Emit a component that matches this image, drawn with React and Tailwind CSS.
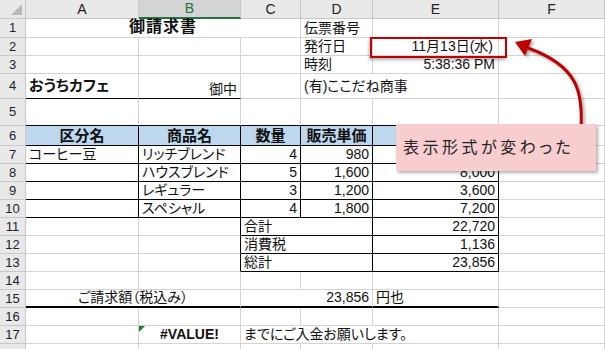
import React from "react";
import clsx from "clsx";

// right / bottom border styles for a cell (grid lines vs. black rules)
const R = { g: "border-r border-r-[#d4d4d4]", k: "border-r border-r-black", n: "" };
const B = {
  g: "border-b border-b-[#d4d4d4]",
  k: "border-b border-b-black",
  k2: "border-b-2 border-b-black",
  n: "",
};
const A = { l: "justify-start", r: "justify-end", c: "justify-center" };

const Cell = ({ r = "g", b = "g", a = "l", className = "", children }) => (
  <div
    className={clsx(
      "relative flex items-end min-w-0 whitespace-nowrap leading-none px-[3px] pb-[2px]",
      R[r],
      B[b],
      A[a],
      className
    )}
  >
    {children}
  </div>
);

const RowHead = ({ n }) => (
  <div className="flex items-center justify-center bg-[#e9e9e9] border-r border-b border-[#c8c8c8] text-[13px] text-[#1e1e2e]">
    {n}
  </div>
);

const ColHead = ({ children, active = false }) => (
  <div
    className={clsx(
      "flex items-center justify-center text-[14px] border-r border-[#c8c8c8]",
      active
        ? "bg-[#d4d4d4] text-[#217346] border-b-2 border-b-[#217346]"
        : "bg-[#e9e9e9] text-[#222] border-b border-b-[#c8c8c8]"
    )}
  >
    {children}
  </div>
);

const blue = "bg-[#bdd7ee] font-bold text-[15px]";

// E6 / E7 sit under the callout, so they are left empty
const items = [
  { n: 7, cat: "コーヒー豆", name: "リッチブレンド", qty: 4, price: "980", sum: "" },
  { n: 8, cat: "", name: "ハウスブレンド", qty: 5, price: "1,600", sum: "8,000" },
  { n: 9, cat: "", name: "レギュラー", qty: 3, price: "1,200", sum: "3,600" },
  { n: 10, cat: "", name: "スペシャル", qty: 4, price: "1,800", sum: "7,200" },
];

const totals = [
  { n: 11, label: "合計", value: "22,720" },
  { n: 12, label: "消費税", value: "1,136" },
  { n: 13, label: "総計", value: "23,856" },
];

export default function App() {
  return (
    <div className="relative w-[605px] h-[349px] overflow-hidden bg-white text-[14px] text-[#111] font-['Liberation_Sans','Noto_Sans_CJK_JP',sans-serif] [font-feature-settings:'palt']">
      <div className="grid grid-cols-[26px_113px_102px_60px_72px_126px_106px] grid-rows-[19px_19px_18px_18px_25px_27px_20px_18px_18px_18px_18px_18px_18px_18px_18px_18px_18px_18px_18px]">
        {/* column headers */}
        <div className="relative bg-[#e9e9e9] border-r border-b border-[#c8c8c8]">
          <svg className="absolute right-[3px] bottom-[3px]" width="11" height="11" viewBox="0 0 11 11">
            <polygon points="11,0 11,11 0,11" fill="#b9b9b9" />
          </svg>
        </div>
        <ColHead>A</ColHead>
        <ColHead active>B</ColHead>
        <ColHead>C</ColHead>
        <ColHead>D</ColHead>
        <ColHead>E</ColHead>
        <ColHead>F</ColHead>

        {/* 1 */}
        <RowHead n={1} />
        <Cell a="c" className="col-span-3 font-bold text-[16px] tracking-[1px]">御請求書</Cell>
        <Cell>伝票番号</Cell>
        <Cell />
        <Cell />

        {/* 2 */}
        <RowHead n={2} />
        <Cell />
        <Cell />
        <Cell />
        <Cell>発行日</Cell>
        <Cell a="r" className="pr-[5px]">11月13日(水)</Cell>
        <Cell />

        {/* 3 */}
        <RowHead n={3} />
        <Cell />
        <Cell />
        <Cell />
        <Cell>時刻</Cell>
        <Cell a="r">5:38:36 PM</Cell>
        <Cell />

        {/* 4 */}
        <RowHead n={4} />
        <Cell b="k" className="font-bold text-[15px] pb-[5px]">おうちカフェ</Cell>
        <Cell b="k" a="r">御中</Cell>
        <Cell />
        <Cell r="n" className="pb-[5px]">(有)ここだね商事</Cell>
        <Cell />
        <Cell />

        {/* 5 */}
        <RowHead n={5} />
        <Cell b="k" />
        <Cell b="k" />
        <Cell b="k" />
        <Cell b="k" />
        <Cell b="k" />
        <Cell />

        {/* 6 : table header */}
        <RowHead n={6} />
        <Cell r="k" b="k" a="c" className={blue}>区分名</Cell>
        <Cell r="k" b="k" a="c" className={blue}>商品名</Cell>
        <Cell r="k" b="k" a="c" className={blue}>数量</Cell>
        <Cell r="k" b="k" a="c" className={blue}>販売単価</Cell>
        <Cell r="k" b="k" a="c" className={blue} />
        <Cell />

        {/* 7-10 : items */}
        {items.map((it) => (
          <React.Fragment key={it.n}>
            <RowHead n={it.n} />
            <Cell r="k" b="k">{it.cat}</Cell>
            <Cell r="k" b="k">{it.name}</Cell>
            <Cell r="k" b="k" a="r">{it.qty}</Cell>
            <Cell r="k" b="k" a="r">{it.price}</Cell>
            <Cell r="k" b="k" a="r">{it.sum}</Cell>
            <Cell />
          </React.Fragment>
        ))}

        {/* 11-13 : totals */}
        {totals.map((t) => (
          <React.Fragment key={t.n}>
            <RowHead n={t.n} />
            <Cell />
            <Cell r="k" />
            <Cell r="k" b="k" className="col-span-2">{t.label}</Cell>
            <Cell r="k" b="k" a="r">{t.value}</Cell>
            <Cell />
          </React.Fragment>
        ))}

        {/* 14 */}
        <RowHead n={14} />
        <Cell />
        <Cell />
        <Cell />
        <Cell />
        <Cell />
        <Cell />

        {/* 15 */}
        <RowHead n={15} />
        <Cell b="k2" a="c" className="col-span-2">ご請求額（税込み）</Cell>
        <Cell b="k2" a="r" className="col-span-2">23,856</Cell>
        <Cell b="k2">円也</Cell>
        <Cell />

        {/* 16 */}
        <RowHead n={16} />
        <Cell />
        <Cell />
        <Cell />
        <Cell />
        <Cell />
        <Cell />

        {/* 17 */}
        <RowHead n={17} />
        <Cell />
        <Cell a="c" className="font-bold">
          <svg className="absolute left-0 top-0" width="6" height="6" viewBox="0 0 6 6">
            <polygon points="0,0 6,0 0,6" fill="#1e7b34" />
          </svg>
          #VALUE!
        </Cell>
        <Cell r="n">までにご入金お願いします。</Cell>
        <Cell r="n" />
        <Cell />
        <Cell />

        {/* 18 (only its top edge shows) */}
        <RowHead n="" />
        <Cell />
        <Cell />
        <Cell />
        <Cell />
        <Cell />
        <Cell />
      </div>

      {/* highlight around E2 */}
      <div className="absolute left-[370px] top-[37px] w-[137px] h-[21px] border-2 border-[#c00000] shadow-[-1px_2px_3px_rgba(0,0,0,0.3)]" />

      {/* arrow */}
      <svg
        className="absolute left-0 top-0 drop-shadow-[2px_2px_1.5px_rgba(0,0,0,0.35)]"
        width="605"
        height="349"
        viewBox="0 0 605 349"
      >
        <path d="M581 128 C583 92 578 66 528 48" fill="none" stroke="#c00000" strokeWidth="3" />
        <polygon points="515,42 532,39 525,56" fill="#c00000" />
      </svg>

      {/* callout */}
      <div className="absolute left-[396px] top-[124px] w-[200px] h-[47px] flex items-center pl-[7px] bg-[#f8cdd0] shadow-[2px_2px_3px_rgba(0,0,0,0.3)] text-[16px] tracking-[3.5px] text-[#222]">
        表示形式が変わった
      </div>
    </div>
  );
}
